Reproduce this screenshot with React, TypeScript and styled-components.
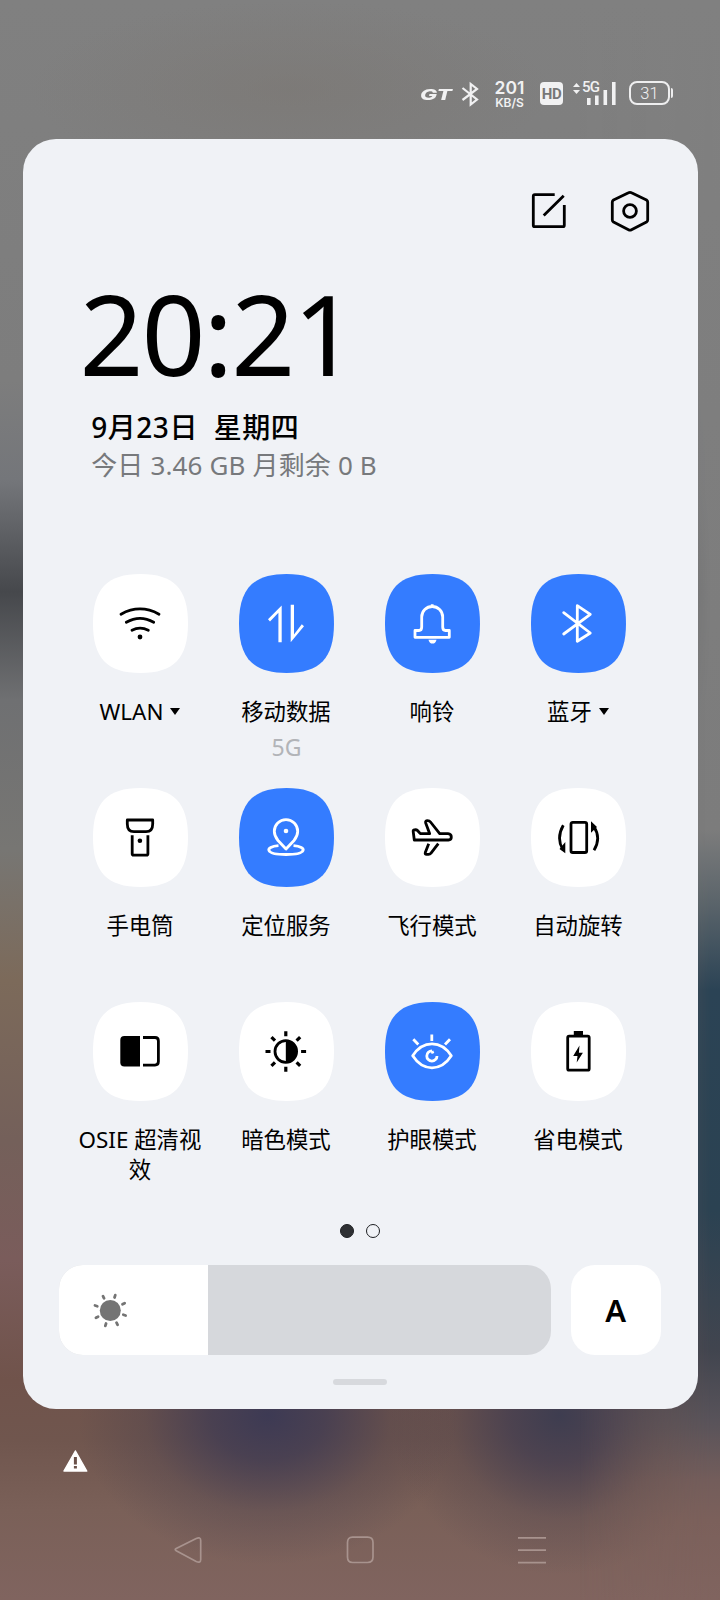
import React from "react";
import styled, { createGlobalStyle } from "styled-components";

const GlobalStyle = createGlobalStyle`
  * { box-sizing: border-box; }
  body { margin: 0; background: #7d7d7d; }
`;

const latin = `"Noto Sans", "Noto Sans CJK SC", sans-serif`;

const Screen = styled.div`
  position: relative;
  width: 720px;
  height: 1600px;
  overflow: hidden;
  display: flex;
  flex-direction: column;
  font-family: ${latin};
  color: #000;
  background:
    radial-gradient(ellipse 190px 150px at 268px 1415px, rgba(61, 58, 84, 1), rgba(64, 59, 82, 0.8) 30%, rgba(70, 62, 78, 0.3) 65%, rgba(76, 66, 76, 0) 100%),
    radial-gradient(ellipse 170px 160px at 560px 1415px, rgba(62, 61, 80, 1), rgba(68, 62, 80, 0.8) 30%, rgba(76, 66, 78, 0.3) 65%, rgba(84, 70, 76, 0) 100%),
    radial-gradient(ellipse 260px 90px at 290px 90px, rgba(122, 117, 112, 0.5), rgba(124, 122, 118, 0) 100%),
    linear-gradient(to bottom, #808080 0, #7d7d7d 380px, #74767a 480px, #46484c 592px, #6f7072 700px, #777673 850px,
      #7c6a5a 980px, #74605a 1140px, #7a5c5b 1260px, #70534b 1380px, #70564e 1440px, #7a6058 1510px, #80645f 1600px);
`;

const RightTint = styled.div`
  position: absolute;
  inset: 0;
  background: linear-gradient(to bottom, #808080 0, #7c7c7c 830px, #5c656b 900px, #2b4355 990px, #2b4252 1210px,
    #41454f 1350px, #58535a 1420px, #735d5b 1480px, #7b605b 1520px, #80645f 1600px);
  mask-image: linear-gradient(to right, transparent 580px, #000 712px);
`;

const StatusBar = styled.div`
  position: relative;
  height: 139px;
  padding: 79px 46px 0 0;
  display: flex;
  justify-content: flex-end;
  align-items: flex-start;
  color: #f1f1f2;
`;

const GtLogo = styled.span`
  width: 33px;
  margin: 7px 8px 0 0;
  font: italic 800 15px/17px Inter, sans-serif;
  transform: scaleX(1.52);
  transform-origin: left;
`;

const NetSpeed = styled.div`
  width: 33px;
  height: 30px;
  margin: 0 14px;
  display: flex;
  flex-direction: column;
  align-items: center;
  justify-content: space-between;
  font: 600 17.5px/17px Inter, sans-serif;
  white-space: nowrap;
`;

const SpeedUnit = styled.span`
  font-size: 12px;
  line-height: 12px;
`;

const HdBadge = styled.div`
  width: 23px;
  height: 23px;
  margin: 3px 10px 0 0;
  border-radius: 4px;
  background: #f1f1f2;
  color: #777;
  font: 700 15px/24px Roboto, sans-serif;
  text-align: center;
  letter-spacing: -0.5px;
`;

const Signal = styled.div`
  position: relative;
  width: 44px;
  height: 28px;
  margin-right: 12px;
`;

const SignalLabel = styled.span`
  position: absolute;
  left: 9px;
  top: 1px;
  font: 500 15px/15px Roboto, sans-serif;
  letter-spacing: -0.8px;
`;

const Battery = styled.div`
  position: relative;
  width: 41px;
  height: 24px;
  margin: 2px 4px 0 0;
  border: 2px solid #eeeeef;
  border-radius: 8px;
  text-align: center;
  font: 300 16.5px/21px Roboto, sans-serif;
  &::after {
    content: "";
    position: absolute;
    right: -5px;
    top: 5px;
    width: 2px;
    height: 10px;
    border-radius: 0 2px 2px 0;
    background: #eeeeef;
  }
`;

const Panel = styled.section`
  position: relative;
  width: 675px;
  height: 1270px;
  margin-left: 22.6px;
  border-radius: 33px;
  background: #f0f2f6;
  display: flex;
  flex-direction: column;
`;

const Header = styled.header`
  display: flex;
  justify-content: flex-end;
  gap: 37px;
  padding: 50.4px 46px 0 0;
  height: 94px;
`;

const Clock = styled.div`
  height: 175px;
  padding: 20px 0 0 57px;
  font: 400 112px/160px "Noto Sans", sans-serif;
  letter-spacing: -2.2px;
`;

const DateLine = styled.div`
  height: 38px;
  padding-left: 68.6px;
  font-size: 28px;
  line-height: 39px;
  font-weight: 500;
  letter-spacing: 0.55px;
  white-space: pre;
`;

const UsageLine = styled.div`
  height: 40px;
  padding-left: 68.6px;
  font-size: 26px;
  line-height: 39px;
  letter-spacing: 0.15px;
  color: #77797c;
  white-space: pre;
`;

const TileGrid = styled.div`
  display: grid;
  grid-template-columns: repeat(4, 146px);
  grid-auto-rows: 214px;
  margin: 88px 0 0 44.9px;
`;

const Tile = styled.div`
  display: flex;
  flex-direction: column;
  align-items: center;
`;

const TileFace = styled.div<{ $on?: boolean }>`
  width: 95px;
  height: 99px;
  padding-right: 1px;
  display: flex;
  align-items: center;
  justify-content: center;
  background: ${(p) => (p.$on ? "#347cff" : "#fff")};
  color: ${(p) => (p.$on ? "#fff" : "#000")};
  clip-path: path("M0 49.5C0 15 14 0 47.5 0S95 15 95 49.5S81 99 47.5 99S0 84 0 49.5Z");
`;

const TileLabel = styled.div`
  width: 131px;
  padding-right: 1px;
  margin-top: 24px;
  font-size: 22.4px;
  line-height: 30px;
  text-align: center;
`;

const Caret = styled.span`
  display: inline-block;
  margin: 0 0 5px 7px;
  border: 5px solid transparent;
  border-top: 7px solid #000;
  border-bottom: 0;
`;

const TileNote = styled.div`
  margin-top: 5px;
  font-size: 23px;
  line-height: 30px;
  color: #b2b4b8;
`;

const Pager = styled.div`
  display: flex;
  justify-content: center;
  gap: 12.5px;
  margin-top: 8px;
  height: 41px;
`;

const Dot = styled.span<{ $current?: boolean }>`
  width: 14px;
  height: 14px;
  border-radius: 50%;
  border: 1.5px solid #1d1f22;
  background: ${(p) => (p.$current ? "#2e3033" : "transparent")};
`;

const BrightnessRow = styled.div`
  display: flex;
  gap: 20px;
  padding-left: 36px;
`;

const Slider = styled.div`
  width: 492px;
  height: 90px;
  border-radius: 24px;
  overflow: hidden;
  background: #d6d8dc;
`;

const SliderFill = styled.div`
  width: 149px;
  height: 90px;
  padding-left: 33px;
  display: flex;
  align-items: center;
  background: #fff;
`;

const AutoButton = styled.div`
  width: 90px;
  height: 90px;
  border-radius: 24px;
  background: #fff;
  font: 600 31px/91px "Noto Sans", sans-serif;
  text-align: center;
`;

const Handle = styled.div`
  width: 54px;
  height: 6px;
  margin: 24px auto 0 310px;
  border-radius: 3px;
  background: #d7d9dd;
`;

const Notice = styled.div`
  position: relative;
  height: 104px;
  padding: 40px 0 0 62px;
`;

const NavBar = styled.nav`
  position: relative;
  display: grid;
  grid-template-columns: repeat(3, 172px);
  justify-items: center;
  margin-left: 102px;
  padding-top: 21px;
`;

const Icon = ({ size = 48, children }: { size?: number; children: React.ReactNode }) => (
  <svg width={size} height={size} viewBox={`0 0 ${size} ${size}`} fill="none" stroke="currentColor"
    strokeWidth={2.8} strokeLinejoin="round">
    {children}
  </svg>
);

const rays = (cx: number, cy: number, from: number, to: number, offset: number) =>
  Array.from({ length: 8 }, (_, i) => {
    const a = ((offset + i * 45) * Math.PI) / 180;
    const s = Math.sin(a);
    const c = Math.cos(a);
    return `M${cx + from * s} ${cy - from * c}L${cx + to * s} ${cy - to * c}`;
  }).join("");

const icons = {
  wifi: (
    <>
      <path d="M5 14.2Q24 3.6 43 14.2M10.3 22.3Q24 14.3 37.7 22.3M16 30.3Q24 26 32.3 30.3" strokeLinecap="round" />
      <circle cx="24" cy="37" r="2.4" fill="currentColor" stroke="none" />
    </>
  ),
  data: (
    <>
      <path d="M8 21.5L6 19.2L19.7 5.5V42.3H16.4V12.8Z" fill="currentColor" stroke="none" />
      <path d="M28.7 4.7H32V34.5L39.8 24.3L42 26.3L28.7 42.3Z" fill="currentColor" stroke="none" />
    </>
  ),
  bell: (
    <>
      <path d="M13.7 27V17A10.5 10.5 0 0 1 34.7 17V27Q34.7 30.5 37.5 30.5H41.3V37.3H7V30.5H11Q13.7 30.5 13.7 27ZM24.2 4.3V6.5" />
      <path d="M20.5 39.7H28.5Q27.5 43.6 24.5 43.6T20.5 39.7Z" fill="currentColor" stroke="none" />
    </>
  ),
  bluetooth: <path d="M9.7 12.7L36.3 33L23.3 41.3V5.7L36.3 14.3L9.7 34" strokeLinecap="round" />,
  torch: (
    <>
      <path d="M11.3 6H36.7V10Q36.7 17.7 30 17.7H18Q11.3 17.7 11.3 10ZM16.2 21.2V39.8Q16.2 41.2 17.5 41.2H30.5Q31.9 41.2 31.9 39.8V21.2" />
      <circle cx="23.9" cy="26.7" r="2.3" fill="currentColor" stroke="none" />
    </>
  ),
  location: (
    <>
      <path d="M24 35L16 26.5Q12.3 22 12.3 17.3A11.7 11.7 0 0 1 35.7 17.3Q35.7 22 32 26.5ZM16.5 31.7C2.5 32.7 2.5 40.5 24 40.5S45.5 32.7 31.5 31.7" />
      <circle cx="24" cy="17" r="2.3" fill="currentColor" stroke="none" />
    </>
  ),
  plane: (
    <path d="M6.3 26H40.5Q43.3 26 43.3 23T40 19.7H31.7L22.5 8Q21.5 6.7 19.5 6.7Q17 6.7 17.7 9L21.7 19.7H12.3L9.5 16.5Q8.5 15.5 6.5 15.8Q5 16 5.2 17.5ZM20.7 29.7L17.3 38.5Q16.8 40.4 18.5 40.4H20.5Q22 40.4 23 39.2L30.3 29.7" />
  ),
  rotate: (
    <>
      <rect x="17" y="8.3" width="15.7" height="30.2" rx="1.8" />
      <path d="M9.3 11.3Q2 24 8.8 35.5M40 36.3Q47.5 24 39.8 12.5" />
      <path d="M11.3 28V39.3L5.5 35ZM37 7.3V18.8L43 13Z" fill="currentColor" stroke="none" />
    </>
  ),
  compare: (
    <>
      <path d="M24 8.1V38.5H8.3Q4.3 38.5 4.3 34.5V12.1Q4.3 8.1 8.3 8.1Z" fill="currentColor" stroke="none" />
      <path d="M27 9.5H39Q42.4 9.5 42.4 13V33.6Q42.4 37.1 39 37.1H27" />
    </>
  ),
  dark: (
    <>
      <circle cx="23.8" cy="23.5" r="10.8" />
      <path d="M23.8 13V34A10.5 10.5 0 0 0 23.8 13Z" fill="currentColor" stroke="none" />
      <path d={rays(23.8, 23.5, 15.3, 20.3, 0)} strokeWidth="3.2" />
    </>
  ),
  eye: (
    <>
      <path d="M4.7 27.8C15 12 33 12 43.3 27.8C33 43.8 15 43.8 4.7 27.8Z" />
      <path d="M24 22.9A5.1 5.1 0 1 0 29 28M24 22.9L25 25.5M23.8 6.5V13M5.3 11.3L10.3 16.5M42 11.3L37 16.5" />
    </>
  ),
  battery: (
    <>
      <rect x="13.7" y="8.2" width="21.5" height="34" rx="1.5" />
      <path d="M19.8 3H29V7H19.8ZM25.5 17.5L19.2 28H23.5L22.7 34.5L28.9 24.7H24.9Z" fill="currentColor" stroke="none" />
    </>
  ),
};

type TileData = { icon: keyof typeof icons; label: string; on?: boolean; menu?: boolean; note?: string };

const tiles: TileData[] = [
  { icon: "wifi", label: "WLAN", menu: true },
  { icon: "data", label: "移动数据", on: true, note: "5G" },
  { icon: "bell", label: "响铃", on: true },
  { icon: "bluetooth", label: "蓝牙", on: true, menu: true },
  { icon: "torch", label: "手电筒" },
  { icon: "location", label: "定位服务", on: true },
  { icon: "plane", label: "飞行模式" },
  { icon: "rotate", label: "自动旋转" },
  { icon: "compare", label: "OSIE 超清视效" },
  { icon: "dark", label: "暗色模式" },
  { icon: "eye", label: "护眼模式", on: true },
  { icon: "battery", label: "省电模式" },
];

const navPaths = [
  "M3.2 16.7L23.2 27.5Q27.7 29.5 27.7 25.5V6.5Q27.7 2.5 23.2 4.5L3.2 14.5Q1.2 15.6 3.2 16.7Z",
  "M7.5 3.2H22.5Q28 3.2 28 8.5V23Q28 28.5 22.5 28.5H7.5Q2.5 28.5 2.5 23V8.5Q2.5 3.2 7.5 3.2Z",
  "M1 3.8H29M1 16.2H29M1 28.7H29",
];

export default function App() {
  return (
    <Screen>
      <GlobalStyle />
      <RightTint />
      <StatusBar>
        <GtLogo>GT</GtLogo>
        <svg width="18" height="28" viewBox="0 0 18 28" fill="none" stroke="currentColor" strokeWidth="2.2">
          <path d="M1.5 9L16 20.5L9.7 25.5V5L16 10L1.5 21" />
        </svg>
        <NetSpeed>
          <span>201</span>
          <SpeedUnit>KB/S</SpeedUnit>
        </NetSpeed>
        <HdBadge>HD</HdBadge>
        <Signal>
          <SignalLabel>5G</SignalLabel>
          <svg width="44" height="28" viewBox="0 0 44 28" fill="currentColor">
            <path d="M0 8L3.5 4L7 8ZM0 11L3.5 15L7 11ZM14 19h3.6v7H14zM22 16.5h3.6v9.5H22zM30.5 11h3.6v15h-3.6zM39 3h3.6v23H39z" />
          </svg>
        </Signal>
        <Battery>31</Battery>
      </StatusBar>
      <Panel>
        <Header>
          <Icon size={44}>
            <path d="M27.7 5.7H7.8Q6.3 5.7 6.3 7.2V36.2Q6.3 37.7 7.8 37.7H35.8Q37.3 37.7 37.3 36.2V16M36.7 6.7L16.7 26.5" />
          </Icon>
          <Icon size={44}>
            <path d="M20.5 3.7Q22 2.9 23.5 3.7L38.5 11Q39.7 11.8 39.7 13V31Q39.7 32.2 38.5 33L23.5 40.8Q22 41.6 20.5 40.8L5.5 33Q4.3 32.2 4.3 31V13Q4.3 11.8 5.5 11Z" />
            <circle cx="22" cy="22" r="6.4" />
          </Icon>
        </Header>
        <Clock>20:21</Clock>
        <DateLine>9月23日  星期四</DateLine>
        <UsageLine>今日 3.46 GB 月剩余 0 B</UsageLine>
        <TileGrid>
          {tiles.map((t) => (
            <Tile key={t.label}>
              <TileFace $on={t.on}>
                <Icon>{icons[t.icon]}</Icon>
              </TileFace>
              <TileLabel>
                {t.label}
                {t.menu && <Caret />}
              </TileLabel>
              {t.note && <TileNote>{t.note}</TileNote>}
            </Tile>
          ))}
        </TileGrid>
        <Pager>
          <Dot $current />
          <Dot />
        </Pager>
        <BrightnessRow>
          <Slider>
            <SliderFill>
              <svg width="36" height="36" viewBox="0 0 36 36" fill="#747474">
                <circle cx="18.3" cy="18.5" r="10.5" />
                <path d={rays(18.3, 18.5, 13.7, 16.1, 18)} stroke="#747474" strokeWidth="2.8" strokeLinecap="round" />
              </svg>
            </SliderFill>
          </Slider>
          <AutoButton>A</AutoButton>
        </BrightnessRow>
        <Handle />
      </Panel>
      <Notice>
        <svg width="26" height="24" viewBox="0 0 26 24">
          <path d="M13.4 2L24.7 22H2Z" fill="#fff" stroke="#fff" strokeWidth="1.5" strokeLinejoin="round" />
          <path d="M13.4 8V15.5M13.4 17V19.5" stroke="#6a514a" strokeWidth="3" />
        </svg>
      </Notice>
      <NavBar>
        {navPaths.map((d) => (
          <svg key={d} width="30" height="32" viewBox="0 0 30 32" fill="none" stroke="#a8938e" strokeWidth="1.7">
            <path d={d} />
          </svg>
        ))}
      </NavBar>
    </Screen>
  );
}
